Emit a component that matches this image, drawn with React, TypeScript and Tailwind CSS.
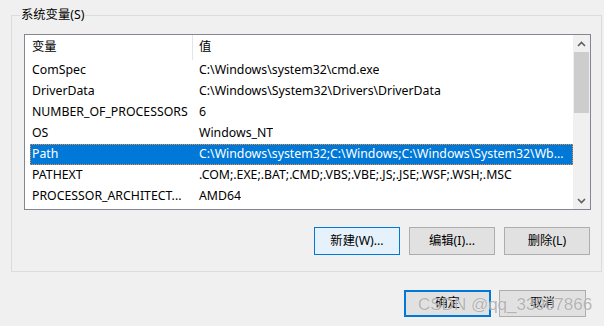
import React from "react";

const rows: [string, string][] = [
  ["ComSpec", "C:\\Windows\\system32\\cmd.exe"],
  ["DriverData", "C:\\Windows\\System32\\Drivers\\DriverData"],
  ["NUMBER_OF_PROCESSORS", "6"],
  ["OS", "Windows_NT"],
  ["Path", "C:\\Windows\\system32;C:\\Windows;C:\\Windows\\System32\\Wb..."],
  ["PATHEXT", ".COM;.EXE;.BAT;.CMD;.VBS;.VBE;.JS;.JSE;.WSF;.WSH;.MSC"],
  ["PROCESSOR_ARCHITECT...", "AMD64"],
];

function Chevron({ up }: { up?: boolean }) {
  return (
    <svg width="9" height="6" viewBox="0 0 9 6" className={up ? "" : "rotate-180"}>
      <path d="M1 5 L4.5 1.5 L8 5" fill="none" stroke="#606060" strokeWidth="1.6" />
    </svg>
  );
}

export default function App() {
  return (
    <div className="relative w-[604px] h-[326px] overflow-hidden bg-[#f0f0f0] text-[12.3px] text-black font-['Noto_Sans','Noto_Sans_CJK_SC',sans-serif]">
      <div className="pt-[15px] pl-[11px] pr-[2px]">
        <div className="relative h-[257px] border border-[#dcdcdc] pl-[12px] pr-[11px] pt-[18px]">
          <span className="absolute left-[8px] top-[-10px] bg-[#f0f0f0] px-[1px] leading-[18px]">
            系统变量(S)
          </span>

          <div className="flex h-[176px] w-[567px] border border-[#828790] bg-white">
            <div className="flex-1 pl-[5px]">
              <div className="flex h-[25px] items-center">
                <div className="w-[163px] pl-[2px] border-r border-[#e5e5e5] h-full flex items-center">变量</div>
                <div className="pl-[6px]">值</div>
              </div>
              {rows.map(([name, value]) => {
                const sel = name === "Path";
                return (
                  <div
                    key={name}
                    className={
                      sel
                        ? "flex h-[21px] items-center whitespace-nowrap bg-[#0078d7] text-white border border-dotted border-[#ff8a28]"
                        : "flex h-[21px] items-center whitespace-nowrap border border-transparent"
                    }
                  >
                    <div className="w-[162px] pl-[1px] overflow-hidden">{name}</div>
                    <div className="pl-[6px] overflow-hidden">{value}</div>
                  </div>
                );
              })}
            </div>
            <div className="flex w-[17px] flex-col bg-[#f0f0f0]">
              <div className="flex h-[17px] items-center justify-center">
                <Chevron up />
              </div>
              <div className="mx-[1px] h-[61px] bg-[#cdcdcd]" />
              <div className="flex-1" />
              <div className="flex h-[17px] items-center justify-center">
                <Chevron />
              </div>
            </div>
          </div>

          <div className="mt-[17px] flex justify-end gap-[9px]">
            <button className="h-[28px] w-[86px] border border-[#0078d7] bg-[#e5f1fb]">新建(W)...</button>
            <button className="h-[28px] w-[86px] border border-[#adadad] bg-[#e1e1e1]">编辑(I)...</button>
            <button className="h-[28px] w-[86px] border border-[#adadad] bg-[#e1e1e1]">删除(L)</button>
          </div>
        </div>
      </div>

      <div className="mt-[18px] flex gap-[8px] pl-[404px]">
        <button className="h-[27px] w-[87px] border-2 border-[#0078d7] bg-[#e1e1e1]">确定</button>
        <button className="h-[27px] w-[87px] border border-[#adadad] bg-[#e1e1e1]">取消</button>
      </div>

      <div className="absolute left-[418px] top-[295px] text-[17px] leading-[20px] text-[rgba(120,120,120,0.55)] font-['Liberation_Sans',sans-serif] [text-shadow:0_0_1px_rgba(255,255,255,0.9)]">
        CSDN @qq_33907866
      </div>
    </div>
  );
}
